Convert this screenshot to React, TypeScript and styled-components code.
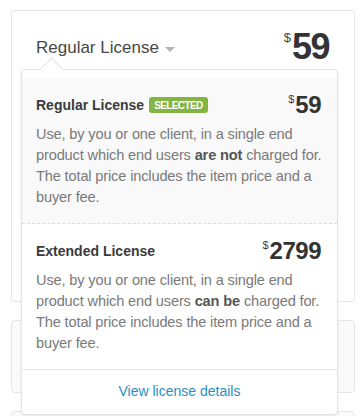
import styled, { createGlobalStyle } from "styled-components";

const GlobalStyle = createGlobalStyle`
  html, body {
    margin: 0;
    padding: 0;
    background: #ffffff;
    font-family: "Liberation Sans", Arial, sans-serif;
    overflow: hidden;
  }
`;

const licenses = [
  {
    name: "Regular License",
    price: "59",
    selected: true,
    charged: "are not",
  },
  {
    name: "Extended License",
    price: "2799",
    selected: false,
    charged: "can be",
  },
];

export default function App() {
  return (
    <>
      <GlobalStyle />
      <Page>
        <Card>
          <Header>
            <Picker>
              Regular License
              <Caret />
            </Picker>
            <BigPrice>
              <BigDollar>$</BigDollar>59
            </BigPrice>
          </Header>

          <Dropdown>
            <Notch />
            {licenses.map((l) => (
              <Option key={l.name} $selected={l.selected}>
                <OptionRow>
                  <OptionTitle>
                    {l.name}
                    {l.selected && <Badge>SELECTED</Badge>}
                  </OptionTitle>
                  <OptionPrice>
                    <SmallDollar>$</SmallDollar>
                    {l.price}
                  </OptionPrice>
                </OptionRow>
                <Description>
                  Use, by you or one client, in a single end product which end
                  users <strong>{l.charged}</strong> charged for. The total
                  price includes the item price and a buyer fee.
                </Description>
              </Option>
            ))}
            <Footer>
              <DetailsLink href="#">View license details</DetailsLink>
            </Footer>
          </Dropdown>
        </Card>
        <GreyCard />
        <GreyCard />
      </Page>
    </>
  );
}

const Page = styled.div`
  display: flex;
  flex-direction: column;
  gap: 18px;
  padding: 10px 7px 0 11px;
`;

const Card = styled.div`
  position: relative;
  height: 292px;
  box-sizing: border-box;
  border: 1px solid #e3e6e8;
  border-radius: 4px;
  background: #fff;
  padding: 18px 25px 0 24px;
`;

const GreyCard = styled.div`
  height: 73px;
  flex-shrink: 0;
  box-sizing: border-box;
  border: 1px solid #e3e6e8;
  border-radius: 4px;
  background: #fafafa;
`;

const Header = styled.div`
  display: flex;
  align-items: center;
  justify-content: space-between;
  height: 36px;
`;

const Picker = styled.div`
  display: flex;
  align-items: center;
  gap: 6px;
  font-size: 17px;
  color: #474747;
  margin-top: 1px;
`;

const Caret = styled.span`
  width: 0;
  height: 0;
  border-left: 5px solid transparent;
  border-right: 5px solid transparent;
  border-top: 5px solid #b4b4b4;
  margin-top: 3px;
`;

const BigPrice = styled.div`
  display: flex;
  align-items: flex-start;
  font-size: 36px;
  line-height: 36px;
  font-weight: bold;
  color: #333;
  letter-spacing: -1.5px;
`;

const BigDollar = styled.span`
  font-size: 13px;
  line-height: 13px;
  font-weight: normal;
  letter-spacing: 0;
  margin-right: 1px;
  margin-top: 2px;
  color: #444;
`;

const Dropdown = styled.div`
  position: absolute;
  top: 58px;
  left: 9px;
  width: 317px;
  box-sizing: border-box;
  padding-top: 8px;
  background: #fff;
  border: 1px solid #e1e5e8;
  border-radius: 4px;
  box-shadow: 0 1px 3px rgba(0, 0, 0, 0.08);
`;

const Notch = styled.span`
  position: absolute;
  top: -9px;
  left: 21px;
  width: 16px;
  height: 16px;
  background: #fff;
  border-top: 1px solid #e1e5e8;
  border-left: 1px solid #e1e5e8;
  transform: rotate(45deg);
`;

const Option = styled.div<{ $selected: boolean }>`
  position: relative;
  padding: 15px 16px 15px 14px;
  background: ${(p) => (p.$selected ? "#f9f9f9" : "#fff")};
  border-bottom: ${(p) => (p.$selected ? "1px dashed #dcdcdc" : "1px solid #e1e8ed")};
`;

const OptionRow = styled.div`
  display: flex;
  align-items: center;
  justify-content: space-between;
  height: 24px;
  margin-bottom: 7px;
`;

const OptionTitle = styled.div`
  display: flex;
  align-items: center;
  gap: 5px;
  font-size: 14px;
  font-weight: bold;
  color: #3b3b3b;
`;

const Badge = styled.span`
  display: inline-flex;
  align-items: center;
  height: 16px;
  padding: 0 5px;
  border-radius: 3px;
  background: #82b541;
  color: #fff;
  font-size: 10px;
  font-weight: bold;
  letter-spacing: -0.6px;
`;

const OptionPrice = styled.div`
  display: flex;
  align-items: flex-start;
  font-size: 24px;
  line-height: 24px;
  font-weight: bold;
  color: #333;
  letter-spacing: -0.5px;
`;

const SmallDollar = styled.span`
  font-size: 11px;
  line-height: 11px;
  font-weight: normal;
  letter-spacing: 0;
  margin-right: 1px;
  margin-top: 1px;
  color: #444;
`;

const Description = styled.p`
  margin: 0 -10px 0 0;
  font-size: 14.6px;
  line-height: 21px;
  letter-spacing: -0.15px;
  color: #7a7a7a;

  strong {
    color: #555;
  }
`;

const Footer = styled.div`
  display: flex;
  justify-content: center;
  padding: 12px 0 14px;
`;

const DetailsLink = styled.a`
  font-size: 14px;
  line-height: 18px;
  color: #2a8fc4;
  text-decoration: none;
`;
